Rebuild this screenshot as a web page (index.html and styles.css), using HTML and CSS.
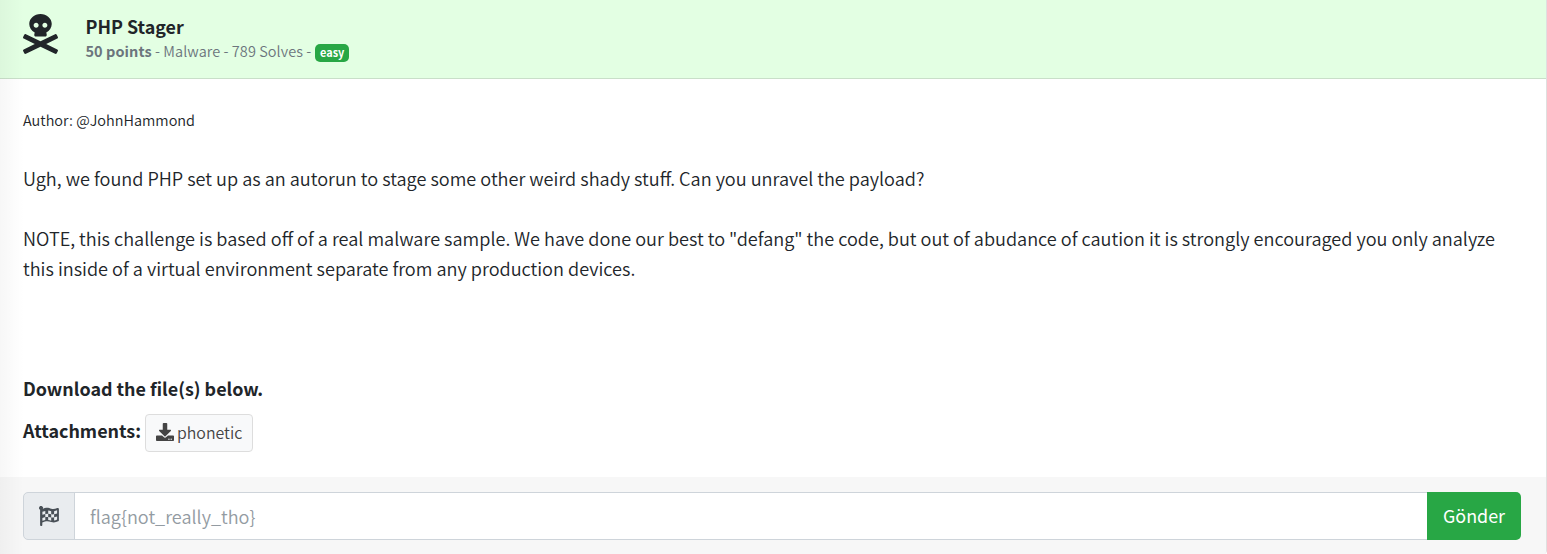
FILE: index.html
```html
<!DOCTYPE html>
<html lang="en">
<head>
<meta charset="utf-8">
<title>PHP Stager</title>
<link rel="stylesheet" href="styles.css">
</head>
<body>
<main class="card">
  <header class="card-header">
    <svg class="skull" viewBox="0 0 448 512" fill="currentColor"><path d="M439.15 453.06L297.17 384l141.99-69.06c7.9-3.95 11.11-13.56 7.15-21.46L432 264.85c-3.95-7.9-13.56-11.11-21.47-7.16L224 348.41 37.47 257.69c-7.9-3.95-17.51-.75-21.47 7.16L1.69 293.48c-3.95 7.9-.75 17.51 7.15 21.46L150.83 384 8.85 453.06c-7.9 3.95-11.11 13.56-7.15 21.47l14.31 28.63c3.95 7.9 13.56 11.11 21.47 7.15L224 419.59l186.53 90.72c7.9 3.95 17.51.75 21.47-7.15l14.31-28.63c3.95-7.91.74-17.52-7.16-21.47zM150 237.28l-5.48 25.87c-2.67 12.62 5.42 24.85 16.45 24.85h126.08c11.03 0 19.12-12.23 16.45-24.85l-5.5-25.87c41.78-22.41 70-62.75 70-109.28C368 57.31 303.53 0 224 0S80 57.31 80 128c0 46.53 28.21 86.87 70 109.28zM280 112c17.65 0 32 14.35 32 32s-14.35 32-32 32-32-14.35-32-32 14.35-32 32-32zm-112 0c17.65 0 32 14.35 32 32s-14.35 32-32 32-32-14.35-32-32 14.35-32 32-32z"/></svg>
    <div class="heading">
      <h1 class="title">PHP Stager</h1>
      <div class="meta"><span><b>50 points</b> - Malware - 789 Solves -</span><span class="badge">easy</span></div>
    </div>
  </header>
  <section class="card-body">
    <p class="author">Author: @JohnHammond</p>
    <p class="text">Ugh, we found PHP set up as an autorun to stage some other weird shady stuff. Can you unravel the payload?</p>
    <p class="text note">NOTE, this challenge is based off of a real malware sample. We have done our best to "defang" the code, but out of abudance of caution it is strongly encouraged you only analyze<br>this inside of a virtual environment separate from any production devices.</p>
    <p class="download">Download the file(s) below.</p>
    <div class="attachments">
      <span class="label">Attachments:</span>
      <a class="file"><svg class="file-icon" viewBox="0 0 512 512" fill="currentColor"><path d="M216 0h80c13.3 0 24 10.7 24 24v168h87.7c17.8 0 26.7 21.5 14.1 34.1L269.7 378.3c-7.5 7.5-19.8 7.5-27.3 0L90.1 226.1c-12.6-12.6-3.7-34.1 14.1-34.1H192V24c0-13.3 10.7-24 24-24zm296 376v112c0 13.3-10.7 24-24 24H24c-13.3 0-24-10.7-24-24V376c0-13.3 10.7-24 24-24h146.7l49 49c20.1 20.1 52.5 20.1 72.6 0l49-49H488c13.3 0 24 10.7 24 24zm-124 88c0-11-9-20-20-20s-20 9-20 20 9 20 20 20 20-9 20-20zm64 0c0-11-9-20-20-20s-20 9-20 20 9 20 20 20 20-9 20-20z"/></svg><span class="file-name">phonetic</span></a>
    </div>
  </section>
  <footer class="card-footer">
    <span class="prefix"><svg class="flag" viewBox="0 0 20 20" fill="currentColor"><path fill-rule="evenodd" d="M1.1 3.7A2 2 0 1 1 3.8 2.9C7.5 1 10 2 12.3 2.8c2 .6 4 .1 6-.8 .8-.3 1.6.1 1.6 1v11.2c0 .5-.2.9-.7 1.1-2.5 1.3-4.8 1.4-7 .7-2.7-.9-5-1.3-8.9.4V19c0 .6-.4 1-1 1h-.3c-.6 0-.9-.4-.9-1zM3.4 5.8v3L6.3 8V4.9zM6.3 8v3.1l2.9-.2V7.7zM9.2 4.6v3.1c1 .1 2 .4 3 .6V5.2c-1-.2-2-.5-3-.6zM12.2 8.3v3.1c1 .2 2 .2 2.9-.1V8.3c-1 .2-2 .2-2.9 0zM15.1 5.2v3.1l3-.9V4.2zM3.4 11.9v2.9l2.9-.8v-2.9zM9.2 10.9V14c1 .1 2 .4 3 .7v-3.3c-1-.2-2-.4-3-.5zM15.1 11.3v3.3c1-.1 2-.5 3-1v-3.1z"/></svg></span>
    <input class="flag-input" type="text" placeholder="flag{not_really_tho}">
    <button class="submit">Gönder</button>
  </footer>
</main>
</body>
</html>
```
FILE: styles.css
```css
* { box-sizing: border-box; }
body {
  margin: 0;
  background: #fff;
  color: #212529;
  font-family: "Noto Sans CJK SC", "Noto Sans", sans-serif;
  font-size: 17.92px;
  font-weight: 350;
  line-height: 30px;
}
p, h1 { margin: 0; font-size: inherit; }
.card {
  position: relative;
  width: 1547px;
  height: 554px;
  border-right: 1px solid #dfdfdf;
  border-bottom-right-radius: 4px;
  overflow: hidden;
}
/* soft shade along the left edge */
.card::after {
  content: "";
  position: absolute;
  inset: 0 auto 0 0;
  width: 24px;
  background: linear-gradient(to right, rgba(0,0,0,.03), rgba(0,0,0,0));
  pointer-events: none;
}
.card-header {
  display: flex;
  height: 79px;
  padding: 14px 23px 0;
  background: #e3ffe3;
  border-bottom: 1px solid #c9dfc9;
}
.skull { width: 35px; height: 40px; flex: none; }
.heading { padding-left: 27.5px; }
.title { font-size: 17.9px; line-height: 24px; font-weight: 700; white-space: nowrap; }
.meta {
  display: flex;
  align-items: center;
  gap: 4px;
  height: 28px;
  color: #6c757d;
  font-size: 14.5px;
  line-height: 24px;
  white-space: nowrap;
}
.meta > span:first-child { margin-top: -2px; letter-spacing: .06px; }
.badge {
  width: 34px;
  height: 18px;
  margin-top: 1px;
  border-radius: 5px;
  background: #28a745;
  color: #fff;
  font-size: 10.9px;
  font-weight: 700;
  line-height: 17px;
  text-align: center;
}
.card-body { height: 398px; padding: 26px 23px 0; }
.author { font-size: 14.47px; white-space: nowrap; }
.text { margin-top: 28px; font-size: 18.11px; white-space: nowrap; }
.note { margin-top: 30px; }
.download { margin-top: 90px; font-weight: 700; }
.attachments { display: flex; gap: 4px; margin-top: 11px; }
.label { line-height: 32px; font-weight: 700; }
.file {
  display: flex;
  align-items: center;
  gap: 3px;
  width: 108px;
  height: 38px;
  padding-left: 10px;
  border: 1px solid #ddd;
  border-radius: 4px;
  background: #f8f9fa;
  color: #444;
  font-size: 15.9px;
}
.file-icon { width: 18px; height: 18px; margin-top: -2px; flex: none; }
.card-footer {
  display: flex;
  height: 77px;
  padding: 15px 25px 14px 23px;
  background: #f7f7f7;
}
.prefix {
  display: flex;
  align-items: center;
  justify-content: center;
  width: 52px;
  height: 48px;
  border: 1px solid #ced4da;
  border-radius: 5px 0 0 5px;
  background: #e9ecef;
  color: #495057;
}
.flag { width: 20px; height: 20px; margin-top: -1px; }
.flag-input {
  flex: 1;
  height: 48px;
  margin-left: -1px;
  padding: 0 15px;
  border: 1px solid #ced4da;
  border-right: 0;
  border-radius: 0;
  font: inherit;
  font-size: 18.08px;
  background: #fff;
}
.flag-input::placeholder { color: #939ba2; opacity: 1; }
.submit {
  width: 94px;
  height: 48px;
  padding: 0 0 2px;
  border: 0;
  border-radius: 0 5px 5px 0;
  background: #28a745;
  color: #fff;
  font: inherit;
  font-weight: 400;
}
```
